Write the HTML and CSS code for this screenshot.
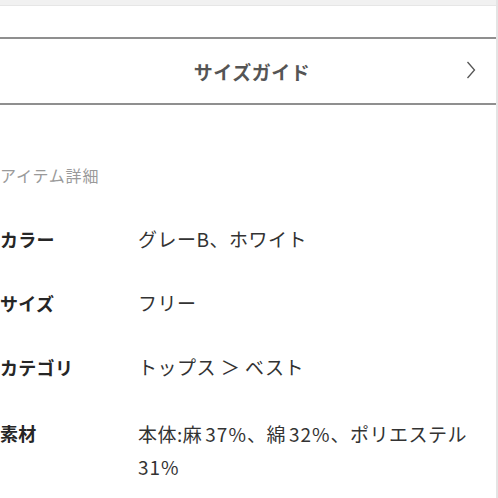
FILE: index.html
```html
<!DOCTYPE html>
<html lang="ja">
<head>
<meta charset="utf-8">
<title>アイテム詳細</title>
<link rel="stylesheet" href="styles.css">
</head>
<body>
<div class="page">
  <div class="top-strip"></div>
  <div class="top-gap"></div>
  <a class="size-guide">
    <span class="size-guide-label">サイズガイド</span>
    <svg class="chevron" width="10" height="18" viewBox="0 0 10 18" aria-hidden="true">
      <polyline points="1.5,1 8.5,9 1.5,17" fill="none" stroke="#555" stroke-width="1.3"/>
    </svg>
  </a>
  <section class="details">
    <h2 class="details-title">アイテム詳細</h2>
    <dl class="spec">
      <div class="spec-row"><dt>カラー</dt><dd>グレーB、ホワイト</dd></div>
      <div class="spec-row"><dt>サイズ</dt><dd>フリー</dd></div>
      <div class="spec-row"><dt>カテゴリ</dt><dd>トップス ＞ ベスト</dd></div>
      <div class="spec-row spec-row-multi"><dt>素材</dt><dd>本体:麻<span class="num">37%</span>、綿<span class="num">32%</span>、ポリエステル<span class="num num-wrap">31%</span></dd></div>
    </dl>
  </section>
</div>
</body>
</html>
```

FILE: styles.css
```css
html, body {
  margin: 0;
  padding: 0;
  background: #fff;
}
body {
  font-family: "Noto Sans CJK JP", "Noto Sans", sans-serif;
  color: #222;
}
.page {
  width: 496px;
  height: 498px;
  border-right: 2px solid #e4e4e4;
  overflow: hidden;
}
.top-strip {
  height: 5px;
  background: #f1f1f1;
  border-bottom: 1px solid #e6e6e6;
}
.top-gap {
  height: 31px;
  border-bottom: 2px solid #8f8f8f;
}
.size-guide {
  position: relative;
  display: flex;
  align-items: center;
  justify-content: center;
  height: 64px;
  border-bottom: 2px solid #8f8f8f;
}
.size-guide-label {
  font-size: 19px;
  font-weight: 700;
  color: #555;
  letter-spacing: 0.5px;
  padding-left: 8px;
}
.chevron {
  position: absolute;
  right: 20px;
  top: 22px;
}
.details {
  padding-top: 58px;
}
.details-title {
  margin: 0;
  font-size: 16px;
  font-weight: 400;
  line-height: 24px;
  letter-spacing: 0.8px;
  color: #9a9a9a;
}
.spec {
  margin: 36px 0 0;
  display: flex;
  flex-direction: column;
  gap: 32px;
}
.spec-row {
  display: flex;
}
.spec-row-multi {
  padding-top: 2px;
}
.spec-row dt {
  width: 138px;
  flex: none;
  font-size: 18px;
  font-weight: 700;
  line-height: 32px;
  letter-spacing: 0.3px;
  color: #262626;
}
.spec-row dd {
  margin: 0;
  width: 345px;
  font-size: 19px;
  line-height: 32px;
  letter-spacing: 0.5px;
  color: #333;
}
.spec-row-multi dd {
  line-height: 33px;
}
.num {
  margin-left: 3px;
  letter-spacing: 1px;
}
.num-wrap {
  margin-left: 0;
}
```
